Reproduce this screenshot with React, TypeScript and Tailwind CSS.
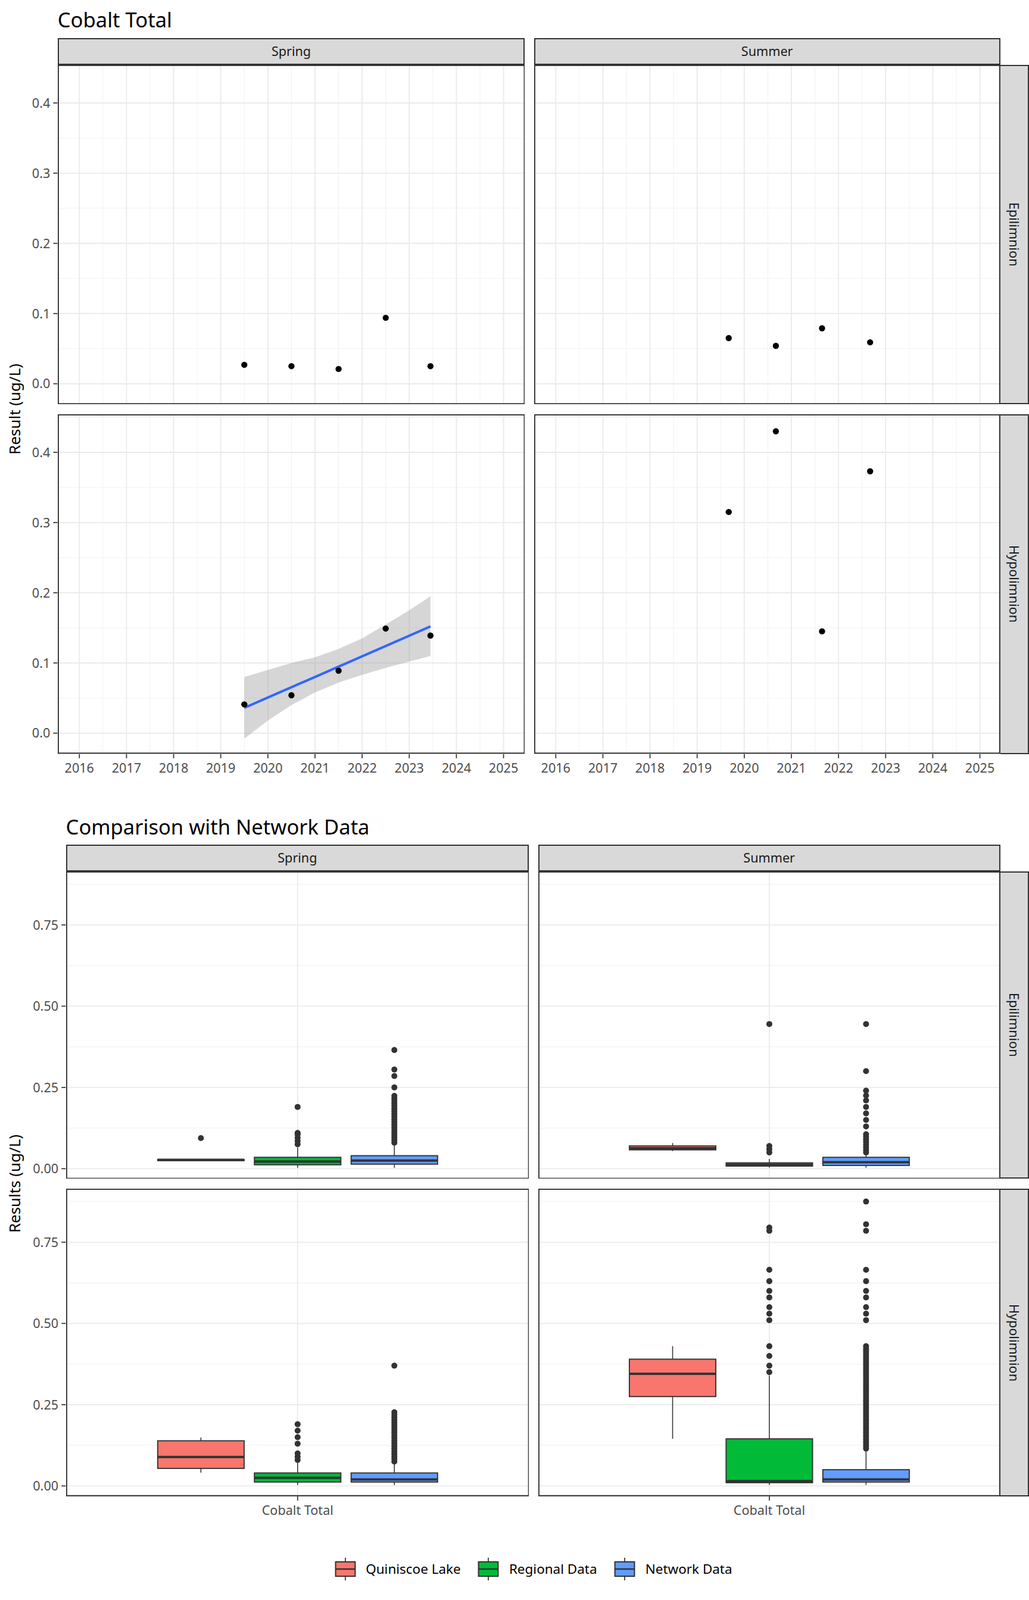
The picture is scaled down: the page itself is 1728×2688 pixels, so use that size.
import React from "react";

const RED = "#F8766D";
const GREEN = "#00BA38";
const BLUE = "#619CFF";
const INK = "#333333";

// ---------- top chart (time series) ----------
const TOP_H = 330;
const yearX = (y: number) => 21 + (y - 2016) * 45.8;
const topY = (v: number) => 310 - v * 682.5;

function TimeGrid({ w }: { w: number }) {
  const lines: React.ReactNode[] = [];
  for (let y = 2015.5; y <= 2025.5; y += 1) {
    const x = yearX(y);
    if (x > 0 && x < w) lines.push(<line key={"mx" + y} x1={x} x2={x} y1={0} y2={TOP_H} stroke="#f2f2f2" strokeWidth={0.6} />);
  }
  for (let v = -0.05; v <= 0.46; v += 0.1) {
    const y = topY(v);
    if (y > 0 && y < TOP_H) lines.push(<line key={"my" + v} x1={0} x2={w} y1={y} y2={y} stroke="#f2f2f2" strokeWidth={0.6} />);
  }
  for (let y = 2016; y <= 2025; y++) {
    const x = yearX(y);
    lines.push(<line key={"x" + y} x1={x} x2={x} y1={0} y2={TOP_H} stroke="#ebebeb" strokeWidth={1.1} />);
  }
  [0, 0.1, 0.2, 0.3, 0.4].forEach((v) =>
    lines.push(<line key={"y" + v} x1={0} x2={w} y1={topY(v)} y2={topY(v)} stroke="#ebebeb" strokeWidth={1.1} />)
  );
  return <>{lines}</>;
}

function TimePanel({ w, pts, trend }: { w: number; pts: [number, number][]; trend?: boolean }) {
  const ribbon: [number, number, number][] = [
    [2019.5, -0.008, 0.08],
    [2020.0, 0.018, 0.09],
    [2020.5, 0.04, 0.1],
    [2021.0, 0.058, 0.108],
    [2021.5, 0.072, 0.12],
    [2022.0, 0.083, 0.135],
    [2022.5, 0.093, 0.155],
    [2023.0, 0.102, 0.175],
    [2023.45, 0.11, 0.195],
  ];
  const rib =
    ribbon.map(([x, , hi]) => `${yearX(x)},${topY(hi)}`).join(" ") +
    " " +
    [...ribbon].reverse().map(([x, lo]) => `${yearX(x)},${topY(lo)}`).join(" ");
  return (
    <svg width={w} height={TOP_H} className="block">
      <TimeGrid w={w} />
      {trend && (
        <>
          <polygon points={rib} fill="#999999" fillOpacity={0.4} />
          <line x1={yearX(2019.5)} y1={topY(0.036)} x2={yearX(2023.45)} y2={topY(0.152)} stroke="#3366FF" strokeWidth={2.4} />
        </>
      )}
      {pts.map(([x, v], i) => (
        <circle key={i} cx={yearX(x)} cy={topY(v)} r={3} fill="#000" />
      ))}
      <rect x={0.5} y={0.5} width={w - 1} height={TOP_H - 1} fill="none" stroke={INK} strokeWidth={1.2} />
    </svg>
  );
}

function TopTicks() {
  return (
    <svg width={28} height={TOP_H} className="block">
      {[0, 0.1, 0.2, 0.3, 0.4].map((v) => (
        <g key={v}>
          <line x1={24} x2={28} y1={topY(v)} y2={topY(v)} stroke={INK} />
          <text x={21} y={topY(v) + 4.5} textAnchor="end" fontSize={12.5} fill="#4d4d4d">
            {v.toFixed(1)}
          </text>
        </g>
      ))}
    </svg>
  );
}

function YearAxis({ w }: { w: number }) {
  return (
    <svg width={w} height={28} className="block">
      {Array.from({ length: 10 }, (_, i) => 2016 + i).map((y) => (
        <g key={y}>
          <line x1={yearX(y)} x2={yearX(y)} y1={0} y2={4} stroke={INK} />
          <text x={yearX(y)} y={18} textAnchor="middle" fontSize={12.5} fill="#4d4d4d">
            {y}
          </text>
        </g>
      ))}
    </svg>
  );
}

// ---------- bottom chart (box plots) ----------
const BOT_H = 299;
const botY = (v: number) => 289 - v * 316;

type Box = { c: number; lo: number; q1: number; med: number; q3: number; hi: number; out: number[]; fill: string };

function range(a: number, b: number, step: number) {
  const r: number[] = [];
  for (let v = a; v <= b + 1e-9; v += step) r.push(v);
  return r;
}

function BoxPanel({ w, boxes }: { w: number; boxes: Box[] }) {
  const c = w / 2;
  return (
    <svg width={w} height={BOT_H} className="block">
      {[0.125, 0.375, 0.625, 0.875].map((v) => (
        <line key={v} x1={0} x2={w} y1={botY(v)} y2={botY(v)} stroke="#f2f2f2" strokeWidth={0.6} />
      ))}
      {[0, 0.25, 0.5, 0.75].map((v) => (
        <line key={v} x1={0} x2={w} y1={botY(v)} y2={botY(v)} stroke="#ebebeb" strokeWidth={1.1} />
      ))}
      <line x1={c} x2={c} y1={0} y2={BOT_H} stroke="#ebebeb" strokeWidth={1.1} />
      {boxes.map((b, i) => {
        const x = c + b.c;
        return (
          <g key={i}>
            <line x1={x} x2={x} y1={botY(b.hi)} y2={botY(b.lo)} stroke={INK} strokeWidth={0.9} />
            <rect x={x - 42} y={botY(b.q3)} width={84} height={Math.max(botY(b.q1) - botY(b.q3), 0.5)} fill={b.fill} stroke={INK} strokeWidth={1.1} />
            <line x1={x - 42} x2={x + 42} y1={botY(b.med)} y2={botY(b.med)} stroke={INK} strokeWidth={2.4} />
            {b.out.map((o, j) => (
              <circle key={j} cx={x} cy={botY(o)} r={2.9} fill={INK} />
            ))}
          </g>
        );
      })}
      <rect x={0.5} y={0.5} width={w - 1} height={BOT_H - 1} fill="none" stroke={INK} strokeWidth={1.2} />
    </svg>
  );
}

function BotTicks() {
  return (
    <svg width={36} height={BOT_H} className="block">
      {[0, 0.25, 0.5, 0.75].map((v) => (
        <g key={v}>
          <line x1={32} x2={36} y1={botY(v)} y2={botY(v)} stroke={INK} />
          <text x={29} y={botY(v) + 4.5} textAnchor="end" fontSize={12.5} fill="#4d4d4d">
            {v.toFixed(2)}
          </text>
        </g>
      ))}
    </svg>
  );
}

function CatAxis({ w }: { w: number }) {
  return (
    <svg width={w} height={29} className="block">
      <line x1={w / 2} x2={w / 2} y1={0} y2={4} stroke={INK} />
      <text x={w / 2} y={18} textAnchor="middle" fontSize={12.5} fill="#4d4d4d">
        Cobalt Total
      </text>
    </svg>
  );
}

const epiSpring: Box[] = [
  { c: -94, lo: 0.025, q1: 0.025, med: 0.027, q3: 0.028, hi: 0.028, out: [0.094], fill: RED },
  { c: 0, lo: 0.003, q1: 0.012, med: 0.022, q3: 0.035, hi: 0.065, out: [0.075, 0.085, 0.095, 0.105, 0.11, 0.19], fill: GREEN },
  { c: 94, lo: 0.003, q1: 0.014, med: 0.025, q3: 0.04, hi: 0.075, out: [...range(0.08, 0.23, 0.008), 0.25, 0.285, 0.305, 0.365], fill: BLUE },
];
const epiSummer: Box[] = [
  { c: -94, lo: 0.054, q1: 0.058, med: 0.063, q3: 0.07, hi: 0.079, out: [], fill: RED },
  { c: 0, lo: 0.003, q1: 0.008, med: 0.012, q3: 0.018, hi: 0.03, out: [0.05, 0.06, 0.07, 0.445], fill: GREEN },
  { c: 94, lo: 0.003, q1: 0.01, med: 0.02, q3: 0.035, hi: 0.045, out: [...range(0.05, 0.11, 0.008), 0.13, 0.15, 0.17, 0.19, 0.21, 0.225, 0.24, 0.3, 0.445], fill: BLUE },
];
const hypoSpring: Box[] = [
  { c: -94, lo: 0.041, q1: 0.054, med: 0.089, q3: 0.139, hi: 0.149, out: [], fill: RED },
  { c: 0, lo: 0.003, q1: 0.012, med: 0.025, q3: 0.04, hi: 0.075, out: [0.08, 0.09, 0.1, 0.13, 0.15, 0.17, 0.19], fill: GREEN },
  { c: 94, lo: 0.003, q1: 0.012, med: 0.02, q3: 0.04, hi: 0.07, out: [...range(0.075, 0.23, 0.008), 0.37], fill: BLUE },
];
const hypoSummer: Box[] = [
  { c: -94, lo: 0.145, q1: 0.275, med: 0.345, q3: 0.39, hi: 0.43, out: [], fill: RED },
  { c: 0, lo: 0.003, q1: 0.01, med: 0.015, q3: 0.145, hi: 0.34, out: [0.35, 0.37, 0.4, 0.43, 0.51, 0.53, 0.55, 0.58, 0.6, 0.63, 0.665, 0.785, 0.795], fill: GREEN },
  { c: 94, lo: 0.003, q1: 0.012, med: 0.02, q3: 0.05, hi: 0.11, out: [...range(0.115, 0.43, 0.007), 0.51, 0.53, 0.55, 0.58, 0.6, 0.63, 0.665, 0.785, 0.805, 0.875], fill: BLUE },
];

// ---------- shared pieces ----------
function TopStrip({ w, label }: { w: number; label: string }) {
  return (
    <div style={{ width: w }} className="h-[26px] bg-[#d9d9d9] border-[1.2px] border-[#333333] flex items-center justify-center text-[12.5px] text-[#1a1a1a]">
      {label}
    </div>
  );
}

function SideStrip({ h, label }: { h: number; label: string }) {
  return (
    <div style={{ height: h }} className="w-[28px] bg-[#d9d9d9] border-[1.2px] border-l-0 border-[#333333] flex items-center justify-center">
      <span className="[writing-mode:vertical-rl] text-[12.5px] text-[#1a1a1a]">{label}</span>
    </div>
  );
}

function YLabel({ text }: { text: string }) {
  return (
    <div className="w-[28px] flex items-center justify-center">
      <span className="[writing-mode:vertical-rl] rotate-180 text-[15px] text-black whitespace-nowrap">{text}</span>
    </div>
  );
}

function LegendKey({ fill, label }: { fill: string; label: string }) {
  return (
    <div className="flex items-center gap-[9px]">
      <svg width={22} height={22} className="block">
        <line x1={11} x2={11} y1={0} y2={22} stroke={INK} />
        <rect x={1.5} y={4} width={19} height={14} fill={fill} stroke={INK} strokeWidth={1.2} />
        <line x1={1.5} x2={20.5} y1={11} y2={11} stroke={INK} strokeWidth={1.5} />
      </svg>
      <span className="text-[13px] text-black">{label}</span>
    </div>
  );
}

export default function App() {
  return (
    <div className="w-[1728px] h-[2688px] bg-white overflow-hidden">
      <div className="w-[1000px] h-[1555px] [zoom:1.728] [font-family:'Liberation_Sans',Arial,sans-serif] flex flex-col">
        {/* Cobalt Total */}
        <div className="h-[37px] pl-[56px] pt-[4px] text-[20px] text-black">Cobalt Total</div>
        <div className="flex">
          <div className="flex flex-col">
            <div className="h-[26px]" />
            <div className="flex flex-1">
              <YLabel text="Result (ug/L)" />
              <div className="flex flex-col gap-[10px]">
                <TopTicks />
                <TopTicks />
              </div>
            </div>
            <div className="h-[28px]" />
          </div>
          <div className="flex flex-col">
            <div className="flex gap-[9px]">
              <TopStrip w={454} label="Spring" />
              <TopStrip w={453} label="Summer" />
            </div>
            <div className="flex flex-col gap-[10px]">
              <div className="flex">
                <TimePanel w={454} pts={[[2019.5, 0.027], [2020.5, 0.025], [2021.5, 0.021], [2022.5, 0.094], [2023.45, 0.025]]} />
                <div className="w-[9px]" />
                <TimePanel w={453} pts={[[2019.67, 0.065], [2020.67, 0.054], [2021.65, 0.079], [2022.67, 0.059]]} />
                <SideStrip h={TOP_H} label="Epilimnion" />
              </div>
              <div className="flex">
                <TimePanel w={454} trend pts={[[2019.5, 0.041], [2020.5, 0.054], [2021.5, 0.089], [2022.5, 0.149], [2023.45, 0.139]]} />
                <div className="w-[9px]" />
                <TimePanel w={453} pts={[[2019.67, 0.315], [2020.67, 0.43], [2021.65, 0.145], [2022.67, 0.373]]} />
                <SideStrip h={TOP_H} label="Hypolimnion" />
              </div>
            </div>
            <div className="flex gap-[9px]">
              <YearAxis w={454} />
              <YearAxis w={453} />
            </div>
          </div>
        </div>

        {/* Comparison with Network Data */}
        <div className="h-[60px] pl-[64px] pt-[28px] text-[20px] text-black">Comparison with Network Data</div>
        <div className="flex">
          <div className="flex flex-col">
            <div className="h-[26px]" />
            <div className="flex flex-1">
              <YLabel text="Results (ug/L)" />
              <div className="flex flex-col gap-[10px]">
                <BotTicks />
                <BotTicks />
              </div>
            </div>
            <div className="h-[29px]" />
          </div>
          <div className="flex flex-col">
            <div className="flex gap-[9px]">
              <TopStrip w={450} label="Spring" />
              <TopStrip w={449} label="Summer" />
            </div>
            <div className="flex flex-col gap-[10px]">
              <div className="flex">
                <BoxPanel w={450} boxes={epiSpring} />
                <div className="w-[9px]" />
                <BoxPanel w={449} boxes={epiSummer} />
                <SideStrip h={BOT_H} label="Epilimnion" />
              </div>
              <div className="flex">
                <BoxPanel w={450} boxes={hypoSpring} />
                <div className="w-[9px]" />
                <BoxPanel w={449} boxes={hypoSummer} />
                <SideStrip h={BOT_H} label="Hypolimnion" />
              </div>
            </div>
            <div className="flex gap-[9px]">
              <CatAxis w={450} />
              <CatAxis w={449} />
            </div>
          </div>
        </div>

        <div className="flex-1 flex items-center justify-center gap-[16px] pl-[36px] pt-[12px]">
          <LegendKey fill={RED} label="Quiniscoe Lake" />
          <LegendKey fill={GREEN} label="Regional Data" />
          <LegendKey fill={BLUE} label="Network Data" />
        </div>
      </div>
    </div>
  );
}
